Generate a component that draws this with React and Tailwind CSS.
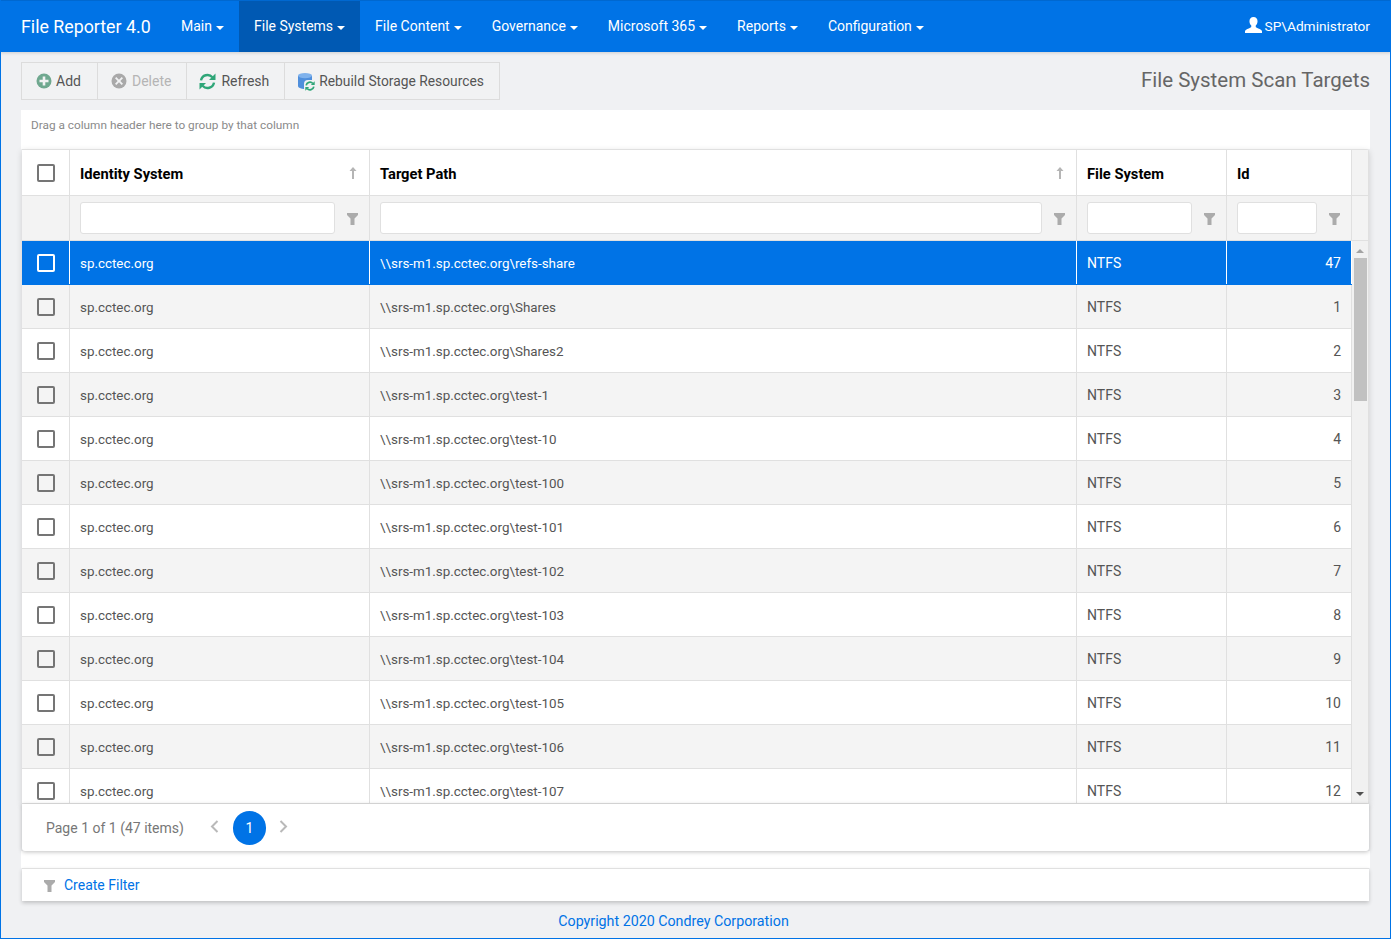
import React from "react";

const FONT = "font-['Roboto','Noto_Sans',sans-serif]";

const menu = ["Main", "File Systems", "File Content", "Governance", "Microsoft 365", "Reports", "Configuration"];

const rows = [
  ["refs-share", 47],
  ["Shares", 1],
  ["Shares2", 2],
  ["test-1", 3],
  ["test-10", 4],
  ["test-100", 5],
  ["test-101", 6],
  ["test-102", 7],
  ["test-103", 8],
  ["test-104", 9],
  ["test-105", 10],
  ["test-106", 11],
  ["test-107", 12],
];

// column widths, same for header, filter row and body
const colCheck = "w-[48px] shrink-0";
const colIdentity = "w-[300px] shrink-0";
const colTarget = "w-[707px] shrink-0";
const colSystem = "w-[150px] shrink-0";
const colId = "w-[125px] shrink-0";

const Caret = () => (
  <svg width="8" height="4" viewBox="0 0 8 4" className="ml-[4px] mt-[2px]">
    <path d="M0 0h8L4 4z" fill="currentColor" />
  </svg>
);

const Funnel = ({ className = "" }) => (
  <svg width="11" height="12" viewBox="0 0 11 12" className={className}>
    <path d="M0 0h11v2L7.5 5.5V12h-4V5.5L0 2z" fill="#ababab" />
  </svg>
);

const SortArrow = () => (
  <svg width="8" height="12" viewBox="0 0 8 12">
    <path d="M4 0 7.5 4H5v8H3V4H.5z" fill="#b5b5b5" />
  </svg>
);

const UserIcon = () => (
  <svg width="17" height="16" viewBox="0 0 16 16" className="mr-[3px] mb-[3px]" preserveAspectRatio="none">
    <path d="M8 0c2.4 0 3.8 1.8 3.8 4.2 0 1.7-.7 3.300-1.700 4.300v1.300c0 .6 1 1 2.400 1.600 1.800.7 3.500 1.500 3.500 2.900V16H0v-1.700c0-1.400 1.700-2.200 3.500-2.900C4.900 10.800 5.900 10.400 5.900 9.800V8.500C4.900 7.500 4.200 5.900 4.200 4.200 4.200 1.800 5.600 0 8 0z" fill="#fff" />
  </svg>
);

const AddIcon = () => (
  <svg width="16" height="16" viewBox="0 0 16 16">
    <circle cx="8" cy="8" r="7.5" fill="#6fa88f" />
    <path d="M6.700 3.500h2.600v3.200h3.200v2.600H9.300v3.200H6.700V9.300H3.500V6.700h3.200z" fill="#f1f2f3" />
  </svg>
);

const DeleteIcon = () => (
  <svg width="16" height="16" viewBox="0 0 16 16">
    <circle cx="8" cy="8" r="7.5" fill="#a9a9a9" />
    <path d="M5.300 4 8 6.700 10.700 4 12 5.300 9.300 8l2.700 2.700-1.300 1.300L8 9.300 5.300 12 4 10.700 6.700 8 4 5.300z" fill="#f1f2f3" />
  </svg>
);

const RefreshIcon = ({ size = 17, color = "#2fa678", stroke = 2.4 }) => (
  <svg width={size} height={size} viewBox="0 0 17 17" fill="none">
    <path d="M2 7.400A6.600 6.600 0 0 1 13.400 4.200" stroke={color} strokeWidth={stroke} />
    <path d="M16.500 0.500v6.500h-6.500z" fill={color} />
    <path d="M15 9.600A6.600 6.600 0 0 1 3.600 12.800" stroke={color} strokeWidth={stroke} />
    <path d="M.5 16.500v-6.500h6.500z" fill={color} />
  </svg>
);

const RebuildIcon = () => (
  <div className="relative w-[17px] h-[17px]">
    <svg width="14" height="16" viewBox="0 0 14 16" className="absolute left-0 top-0">
      <path d="M0 3v10c0 1.600 3 3 7 3s7-1.400 7-3V3z" fill="#4f8fdc" />
      <ellipse cx="7" cy="2.600" rx="7" ry="2.600" fill="#7fb2ec" />
    </svg>
    <div className="absolute left-[6px] top-[7px] bg-[#f1f2f3] rounded-sm p-[1px]">
      <RefreshIcon size={10} stroke={3} />
    </div>
  </div>
);

const Checkbox = ({ selected }) => (
  <div
    className={`w-[18px] h-[18px] rounded-[2px] border-2 ${
      selected ? "border-white" : "border-[#757575]"
    }`}
  />
);

const HeaderCell = ({ label, width, sort }) => (
  <div className={`${width} border-r border-[#e0e0e0] flex items-center justify-between pl-[10px] pr-[12px]`}>
    <span className="text-[14.7px] font-bold text-black mt-[3px]">{label}</span>
    {sort && <SortArrow />}
  </div>
);

const FilterCell = ({ width, input }) => (
  <div className={`${width} border-r border-[#e0e0e0] flex items-center pl-[10px] pr-[11px] justify-between`}>
    <div className={`${input} h-[32px] bg-white border border-[#e0e0e0] rounded-[3px]`} />
    <Funnel className="mt-[1px]" />
  </div>
);

const App = () => {
  return (
    <div className={`${FONT} h-[939px] overflow-hidden bg-[#f0f1f3] border-x border-b border-[#0073e6] flex flex-col`}>
      {/* Navbar */}
      <nav className="h-[52px] shrink-0 bg-[#0073e6] flex items-stretch justify-between text-white -mx-px pl-[21px] pr-[21px] border-t border-[#0068d0] shadow-[0_1px_3px_rgba(0,0,0,0.15)]">
        <div className="flex items-stretch">
          <div className="text-[17.8px] flex items-center w-[145px] shrink-0 whitespace-nowrap pt-[2px]">File Reporter 4.0</div>
          {menu.map((m) => (
            <div
              key={m}
              className={`flex items-center px-[15px] text-[14px] whitespace-nowrap ${
                m === "File Systems" ? "bg-[#0059b3]" : ""
              }`}
            >
              {m}
              <Caret />
            </div>
          ))}
        </div>
        <div className="flex items-center text-[13.7px]">
          <UserIcon />
          SP\Administrator
        </div>
      </nav>

      <main className="flex-1 flex flex-col pl-[20px] pr-[20px]">
        {/* Toolbar + title */}
        <div className="flex items-start justify-between pt-[10px] h-[58px] shrink-0">
          <div className="flex h-[38px] border border-[#dcdcdc] text-[14px] text-[#555] bg-[#f1f2f3]">
            <div className="flex items-center gap-[4px] pl-[14px] pr-[16px] border-r border-[#dcdcdc]">
              <AddIcon />
              Add
            </div>
            <div className="flex items-center gap-[5px] pl-[13px] pr-[15px] border-r border-[#dcdcdc] text-[#b5b5b5]">
              <DeleteIcon />
              Delete
            </div>
            <div className="flex items-center gap-[5px] pl-[12px] pr-[15px] border-r border-[#dcdcdc]">
              <RefreshIcon />
              Refresh
            </div>
            <div className="flex items-center gap-[4px] pl-[13px] pr-[15px] text-[13.8px]">
              <RebuildIcon />
              Rebuild Storage Resources
            </div>
          </div>
          <h1 className="text-[20.5px] text-[#666] mt-[3px]">File System Scan Targets</h1>
        </div>

        {/* Group panel */}
        <div className="h-[39px] shrink-0 bg-white flex items-center pl-[10px] text-[11.8px] text-[#8a8a8a] pb-[7px]">
          Drag a column header here to group by that column
        </div>

        {/* Grid */}
        <div className="mx-px border-y border-r border-[#e0e0e0] rounded-tr-[3px] bg-white shadow-[0_2px_6px_rgba(0,0,0,0.15)]">
          <div className="flex h-[46px] border-b border-[#e0e0e0]">
            <div className={`${colCheck} border-r border-[#e0e0e0] flex items-center justify-center`}>
              <Checkbox />
            </div>
            <HeaderCell label="Identity System" width={colIdentity} sort />
            <HeaderCell label="Target Path" width={colTarget} sort />
            <HeaderCell label="File System" width={colSystem} />
            <HeaderCell label="Id" width={colId} />
            <div className="flex-1 bg-[#f3f3f3]" />
          </div>
          <div className="flex h-[45px] bg-[#f3f3f3] border-b border-[#e0e0e0]">
            <div className={`${colCheck} border-r border-[#e0e0e0]`} />
            <FilterCell width={colIdentity} input="w-[255px]" />
            <FilterCell width={colTarget} input="w-[662px]" />
            <FilterCell width={colSystem} input="w-[105px]" />
            <FilterCell width={colId} input="w-[80px]" />
            <div className="flex-1" />
          </div>
          <div className="flex h-[562px] overflow-hidden">
            <div className="shrink-0 w-[1330px] overflow-hidden">
              {rows.map(([path, id], i) => {
                const selected = i === 0;
                const line = selected ? "border-white" : "border-[#e0e0e0]";
                return (
                  <div
                    key={id}
                    className={`flex h-[44px] shrink-0 border-b text-[13.4px] ${
                      selected
                        ? "bg-[#0073e6] text-white border-[#0073e6]"
                        : `border-[#e0e0e0] text-[#555] ${i % 2 === 1 ? "bg-[#f4f4f4]" : "bg-white"}`
                    }`}
                  >
                    <div className={`${colCheck} border-r ${line} flex items-center justify-center`}>
                      <Checkbox selected={selected} />
                    </div>
                    <div className={`${colIdentity} border-r ${line} flex items-center pl-[10px] pt-[3px]`}>sp.cctec.org</div>
                    <div className={`${colTarget} border-r ${line} flex items-center pl-[10px] pt-[3px]`}>
                      {`\\\\srs-m1.sp.cctec.org\\${path}`}
                    </div>
                    <div className={`${colSystem} border-r ${line} flex items-center pl-[10px] pt-[2px] text-[14px]`}>NTFS</div>
                    <div className={`${colId} border-r ${line} flex items-center justify-end pr-[10px] pt-[2px] text-[14px]`}>{id}</div>
                  </div>
                );
              })}
            </div>
            {/* Scrollbar */}
            <div className="flex-1 bg-[#f1f1f1] flex flex-col items-center">
              <svg width="8" height="4" viewBox="0 0 8 4" className="mt-[8px] mb-[5px] shrink-0">
                <path d="M4 0l4 4H0z" fill="#a3a3a3" />
              </svg>
              <div className="w-[13px] h-[143px] bg-[#c1c1c1] shrink-0" />
              <div className="flex-1" />
              <svg width="8" height="4" viewBox="0 0 8 4" className="mb-[7px] shrink-0">
                <path d="M0 0h8L4 4z" fill="#505050" />
              </svg>
            </div>
          </div>
        </div>

        {/* Pager */}
        <div className="relative mx-px h-[47px] shrink-0 bg-white flex items-center pl-[24px] text-[14px] text-[#777] rounded-b-[3px] shadow-[0_1px_4px_rgba(0,0,0,0.25)]">
          <span className="w-[164px] whitespace-nowrap mt-[2px]">Page 1 of 1 (47 items)</span>
          <svg width="9" height="13" viewBox="0 0 9 13" fill="none" className="mb-[2px]">
            <path d="M7.5 1 2 6.5 7.5 12" stroke="#b9b9b9" strokeWidth="2" />
          </svg>
          <div className="ml-[14px] w-[33px] h-[34px] rounded-full bg-[#0073e6] text-white flex items-center justify-center pt-[2px]">
            1
          </div>
          <svg width="9" height="13" viewBox="0 0 9 13" fill="none" className="ml-[13px] mb-[2px]">
            <path d="M1.5 1 7 6.5 1.5 12" stroke="#b9b9b9" strokeWidth="2" />
          </svg>
        </div>

        <div className="h-[17px] shrink-0 bg-white" />

        {/* Filter panel */}
        <div className="mx-px h-[33px] shrink-0 bg-white border-t border-[#e0e0e0] flex items-center pl-[22px] gap-[9px] text-[14px] text-[#0073e6] shadow-[0_2px_4px_rgba(0,0,0,0.2)]">
          <Funnel className="mt-[2px]" />
          Create Filter
        </div>

        <footer className="flex-1 flex items-center justify-center text-[14.25px] text-[#0073e6] mt-[4px] pr-[44px]">
          Copyright 2020 Condrey Corporation
        </footer>
      </main>
    </div>
  );
};

export default App;
